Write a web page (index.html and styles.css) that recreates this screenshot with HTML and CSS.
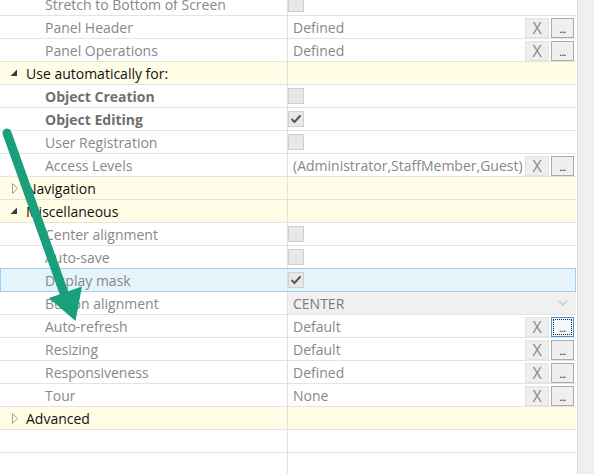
FILE: index.html
```html
<!DOCTYPE html>
<html>
<head>
<meta charset="utf-8">
<link rel="stylesheet" href="styles.css">
</head>
<body>
<div class="screen">
  <div class="grid">
    <div class="row"><div class="name child">Stretch to Bottom of Screen</div><div class="value"><span class="cb"></span></div></div>
    <div class="row"><div class="name child">Panel Header</div><div class="value"><span class="val">Defined</span><span class="bx">X</span><span class="bd">...</span></div></div>
    <div class="row"><div class="name child">Panel Operations</div><div class="value"><span class="val">Defined</span><span class="bx">X</span><span class="bd">...</span></div></div>
    <div class="row group"><div class="name"><svg class="tri" width="8" height="8" viewBox="0 0 8 8"><polygon points="7,0.5 7,7 0.5,7" fill="#3c3c3c"/></svg>Use automatically for:</div><div class="value"></div></div>
    <div class="row"><div class="name child bold">Object Creation</div><div class="value"><span class="cb"></span></div></div>
    <div class="row"><div class="name child bold">Object Editing</div><div class="value"><span class="cb"><svg width="14" height="14" viewBox="0 0 14 14"><polyline points="2.5,7 5.5,10 11.5,3.5" fill="none" stroke="#555" stroke-width="2"/></svg></span></div></div>
    <div class="row"><div class="name child">User Registration</div><div class="value"><span class="cb"></span></div></div>
    <div class="row"><div class="name child">Access Levels</div><div class="value"><span class="val">(Administrator,StaffMember,Guest)</span><span class="bx">X</span><span class="bd">...</span></div></div>
    <div class="row group"><div class="name"><svg class="tri closed" width="8" height="11" viewBox="0 0 8 11"><polygon points="1.5,0.5 6.5,5.5 1.5,10.5" fill="none" stroke="#a0a0a0"/></svg>Navigation</div><div class="value"></div></div>
    <div class="row group"><div class="name"><svg class="tri" width="8" height="8" viewBox="0 0 8 8"><polygon points="7,0.5 7,7 0.5,7" fill="#3c3c3c"/></svg>Miscellaneous</div><div class="value"></div></div>
    <div class="row"><div class="name child">Center alignment</div><div class="value"><span class="cb"></span></div></div>
    <div class="row"><div class="name child">Auto-save</div><div class="value"><span class="cb"></span></div></div>
    <div class="row selected"><div class="name child">Display mask</div><div class="value"><span class="cb"><svg width="14" height="14" viewBox="0 0 14 14"><polyline points="2.5,7 5.5,10 11.5,3.5" fill="none" stroke="#555" stroke-width="2"/></svg></span></div></div>
    <div class="row"><div class="name child">Button alignment</div><div class="value combo"><span class="val">CENTER</span><svg class="chev" width="10" height="6" viewBox="0 0 10 6"><polyline points="1,1 5,5 9,1" fill="none" stroke="#c6c6c6" stroke-width="1.2"/></svg></div></div>
    <div class="row"><div class="name child">Auto-refresh</div><div class="value"><span class="val">Default</span><span class="bx">X</span><span class="bd focus"><span class="dots">...</span></span></div></div>
    <div class="row"><div class="name child">Resizing</div><div class="value"><span class="val">Default</span><span class="bx">X</span><span class="bd">...</span></div></div>
    <div class="row"><div class="name child">Responsiveness</div><div class="value"><span class="val">Defined</span><span class="bx">X</span><span class="bd">...</span></div></div>
    <div class="row"><div class="name child">Tour</div><div class="value"><span class="val">None</span><span class="bx">X</span><span class="bd">...</span></div></div>
    <div class="row group"><div class="name"><svg class="tri closed" width="8" height="11" viewBox="0 0 8 11"><polygon points="1.5,0.5 6.5,5.5 1.5,10.5" fill="none" stroke="#a0a0a0"/></svg>Advanced</div><div class="value"></div></div>
    <div class="row"><div class="name"></div><div class="value"></div></div>
    <div class="row"><div class="name"></div><div class="value"></div></div>
  </div>
  <div class="gutter"></div>
  <div class="scrollbar"></div>
  <svg class="arrow" width="594" height="474" viewBox="0 0 594 474">
    <line x1="7" y1="133" x2="64" y2="293" stroke="#1a9f7c" stroke-width="9" stroke-linecap="round"/>
    <polygon points="49,298 82,286.5 75.5,321" fill="#1a9f7c"/>
  </svg>
</div>
</body>
</html>
```

FILE: styles.css
```css
html, body {
  margin: 0;
  padding: 0;
  background: #ffffff;
}

body {
  font-family: "Open Sans", "Noto Sans", sans-serif;
  font-size: 14px;
  overflow: hidden;
}

.screen {
  position: relative;
  display: flex;
  width: 594px;
  height: 474px;
  overflow: hidden;
}

.grid {
  width: 576px;
  margin-top: -7px;
  flex: none;
}

.gutter {
  width: 1px;
  flex: none;
}

.scrollbar {
  flex: 1;
  border-left: 1px solid #dadada;
  background: #f0f0f0;
}

.row {
  display: flex;
  height: 22px;
  border-bottom: 1px solid #e3e3e3;
}

.name {
  box-sizing: border-box;
  width: 288px;
  flex: none;
  border-right: 1px solid #e0e0e0;
  color: #888888;
  white-space: nowrap;
  overflow: hidden;
  display: flex;
  align-items: center;
  padding-top: 2px;
  line-height: 20px;
}

.name.child {
  padding-left: 45px;
}

.name.bold {
  font-weight: 700;
  color: #6f6f6f;
}

.value {
  flex: 1;
  display: flex;
  align-items: center;
  min-width: 0;
  color: #888888;
  white-space: nowrap;
}

.val {
  flex: 1;
  box-sizing: border-box;
  height: 22px;
  padding: 2px 0 0 5px;
  line-height: 20px;
  overflow: hidden;
}

.group {
  background: #fffde5;
}

.group .name {
  color: #111111;
  padding-left: 10px;
}

.tri {
  flex: none;
  margin-right: 8px;
  margin-top: -2px;
}

.tri.closed {
  margin-left: 1px;
  margin-right: 7px;
}

.cb {
  box-sizing: border-box;
  width: 16px;
  height: 16px;
  border: 1px solid #cfcfcf;
  background: #e8e8e8;
  display: flex;
  align-items: center;
  justify-content: center;
}

.bx {
  box-sizing: border-box;
  width: 24px;
  height: 20px;
  margin-top: 1px;
  border: 1px solid #e3e3e3;
  background: #eeeeee;
  color: #8a8a8a;
  font-size: 16px;
  line-height: 18px;
  text-align: center;
  flex: none;
}

.bd {
  box-sizing: border-box;
  width: 23px;
  height: 20px;
  margin: 1px 2px 0 2px;
  border: 1px solid #ababab;
  background: #efefef;
  color: #1a1a1a;
  font-size: 10px;
  line-height: 10px;
  display: flex;
  align-items: flex-end;
  justify-content: center;
  padding-bottom: 3px;
  letter-spacing: -0.5px;
  flex: none;
}

.bd.focus {
  border-color: #3d97e8;
  background: #f6f9fc;
  padding: 1px;
  align-items: stretch;
}

.dots {
  flex: 1;
  border: 1px dotted #222222;
  display: flex;
  align-items: flex-end;
  justify-content: center;
  padding-bottom: 1px;
}

.selected {
  background: #e5f3fb;
  border-bottom-color: #9fd0f2;
  box-shadow: inset 1px 0 0 #9fd0f2, inset -1px 0 0 #9fd0f2, 0 -1px 0 #9fd0f2;
}

.combo {
  background: #f0f0f0;
}

.combo .val {
  color: #7a7a7a;
}

.chev {
  margin-right: 8px;
  flex: none;
}

.arrow {
  position: absolute;
  left: 0;
  top: 0;
  pointer-events: none;
}
```
